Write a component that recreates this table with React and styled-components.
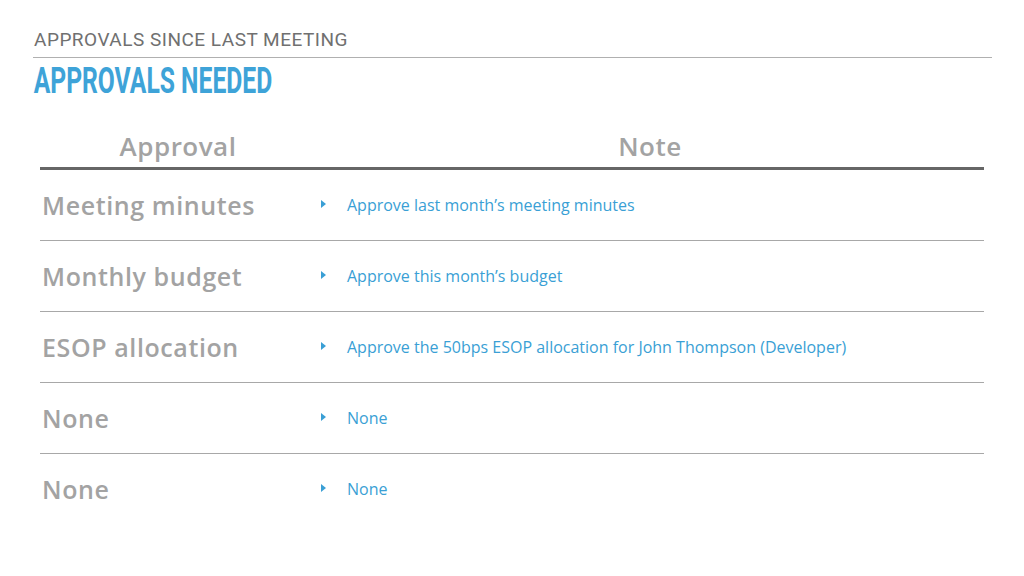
import React from 'react'
import styled, { createGlobalStyle } from 'styled-components'

const rows = [
    { approval: 'Meeting minutes', note: 'Approve last month’s meeting minutes' },
    { approval: 'Monthly budget', note: 'Approve this month’s budget' },
    { approval: 'ESOP allocation', note: 'Approve the 50bps ESOP allocation for John Thompson (Developer)' },
    { approval: 'None', note: 'None' },
    { approval: 'None', note: 'None' },
]

const GlobalStyle = createGlobalStyle`
    html, body {
        margin: 0;
        background: #ffffff;
    }
    body {
        font-family: "Open Sans", "Noto Sans", sans-serif;
    }
`

const Bullet = () => (
    <BulletIcon width="5" height="8" viewBox="0 0 5 8">
        <path d="M0 0 L5 4 L0 8 Z" fill="#3a9fd5" />
    </BulletIcon>
)

const App = () => {
    return (
        <Slide>
            <GlobalStyle />
            <Header>
                <Kicker>APPROVALS SINCE LAST MEETING</Kicker>
                <Title>APPROVALS NEEDED</Title>
            </Header>
            <Table>
                <HeadRow>
                    <HeadCell>Approval</HeadCell>
                    <HeadCell>Note</HeadCell>
                </HeadRow>
                {rows.map((row, i) => (
                    <Row key={i} isLast={i === rows.length - 1}>
                        <ApprovalCell>{row.approval}</ApprovalCell>
                        <NoteCell>
                            <Bullet />
                            <NoteText>{row.note}</NoteText>
                        </NoteCell>
                    </Row>
                ))}
            </Table>
        </Slide>
    )
}

const Slide = styled.div`
    width: 1024px;
    height: 576px;
    overflow: hidden;
    background: #ffffff;
    display: flex;
    flex-direction: column;
`
const Header = styled.header`
    margin: 29px 32px 0 33px;
`
const Kicker = styled.div`
    font-family: Roboto, "Liberation Sans", sans-serif;
    font-size: 19px;
    line-height: 22px;
    letter-spacing: 0.5px;
    color: #707070;
    padding: 0 0 6px 1px;
    border-bottom: 1px solid #b0b0b0;
`
// condensed display face: Roboto bold squeezed horizontally
const Title = styled.h1`
    display: inline-block;
    margin: 0;
    padding: 3px 0 0 1px;
    font-family: Roboto, "Liberation Sans", sans-serif;
    font-weight: 700;
    font-size: 37px;
    line-height: 40px;
    color: #3ea3d8;
    white-space: nowrap;
    transform: scaleX(0.667);
    transform-origin: left center;
`
const Table = styled.div`
    margin: 24px 40px 0 40px;
    display: flex;
    flex-direction: column;
`
const HeadRow = styled.div`
    display: grid;
    grid-template-columns: 276px 1fr;
    height: 42px;
    align-items: center;
    border-bottom: 3px solid #666666;
`
const HeadCell = styled.div`
    text-align: center;
    font-size: 26px;
    font-weight: 600;
    letter-spacing: 0.5px;
    color: #a3a3a3;
`
const Row = styled.div`
    display: grid;
    grid-template-columns: 276px 1fr;
    align-items: center;
    height: 70px;
    border-bottom: ${({isLast}) => isLast ? 'none' : '1.5px solid #a8a8a8'};
`
const ApprovalCell = styled.div`
    padding-left: 2px;
    font-size: 25px;
    font-weight: 600;
    letter-spacing: 0.6px;
    color: #a3a3a3;
`
const NoteCell = styled.div`
    display: flex;
    align-items: center;
    padding-left: 5px;
`
const BulletIcon = styled.svg`
    flex: 0 0 auto;
    margin-right: 21px;
    margin-top: -3px;
`
const NoteText = styled.span`
    font-size: 16px;
    color: #3a9fd5;
`

export default App
